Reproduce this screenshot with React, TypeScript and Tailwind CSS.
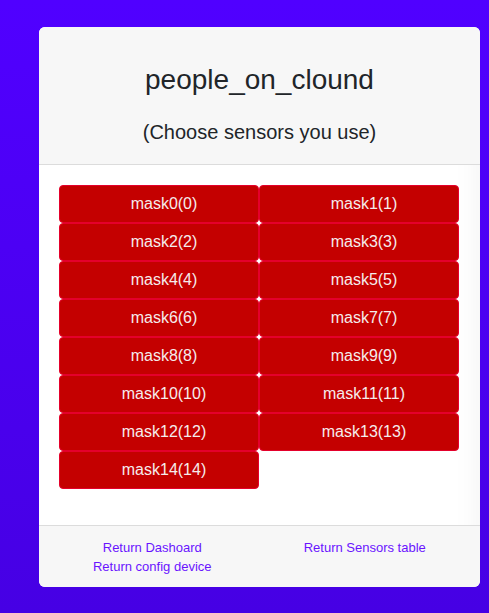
import React from "react";

const masks = Array.from({ length: 15 }, (_, i) => `mask${i}(${i})`);

export default function App() {
  return (
    <div
      className="w-[489px] h-[613px] bg-gradient-to-b from-[#5000ff] to-[#4600e4] pt-[27px] pl-[39px]"
      style={{ fontFamily: '"Liberation Sans", Arial, sans-serif' }}
    >
      <div className="w-[441px] h-[560px] rounded-[6px] overflow-hidden bg-white flex flex-col shadow-[inset_-30px_0_30px_-30px_rgba(0,0,0,0.06)]">
        <div className="h-[138px] bg-[#f7f7f7] border-b border-[#dcdcdc] flex flex-col items-center text-[#212529]">
          <h1 className="text-[28px] leading-[32px] mt-[37px]">people_on_clound</h1>
          <p className="text-[20px] leading-[24px] mt-[24px]">(Choose sensors you use)</p>
        </div>
        <div className="flex-1 pt-[20px] pl-[20px] pr-[21px]">
          <div className="grid grid-cols-2 w-[400px]">
            {masks.map((m) => (
              <button
                key={m}
                className="h-[38px] pl-[10px] bg-[#c40000] border border-[#e4002b] rounded-[4px] text-[#f5ecec] text-[16px] leading-[20px]"
              >
                {m}
              </button>
            ))}
          </div>
        </div>
        <div className="h-[62px] bg-[#f7f7f7] border-t border-[#dcdcdc] grid grid-cols-2 pl-[7px] pr-[9px] pt-[12px] text-[13px] leading-[19px] text-[#6a14ff]">
          <div className="flex flex-col items-center">
            <a href="#">Return Dashoard</a>
            <a href="#">Return config device</a>
          </div>
          <div className="flex flex-col items-center">
            <a href="#">Return Sensors table</a>
          </div>
        </div>
      </div>
    </div>
  );
}
